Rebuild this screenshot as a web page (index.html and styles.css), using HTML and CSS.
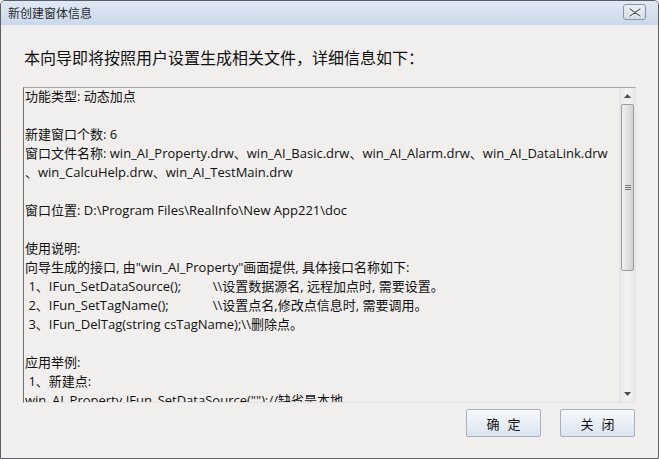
FILE: index.html
```html
<!DOCTYPE html>
<html lang="zh">
<head>
<meta charset="utf-8">
<link rel="stylesheet" href="styles.css">
</head>
<body>
<div class="window">
  <div class="titlebar">
    <span class="title">新创建窗体信息</span>
    <span class="close">
      <svg width="14" height="9" viewBox="0 0 14 9"><path d="M2 1 L12 8 M12 1 L2 8" stroke="#fff" stroke-width="3.2" stroke-linecap="round"/><path d="M2 1 L12 8 M12 1 L2 8" stroke="#5a6270" stroke-width="1.4" stroke-linecap="round"/></svg>
    </span>
  </div>
  <div class="content">
    <div class="heading">本向导即将按照用户设置生成相关文件，详细信息如下：</div>
    <div class="textbox">
      <div class="text">
        <div class="line">功能类型: 动态加点</div>
        <div class="line"></div>
        <div class="line">新建窗口个数: 6</div>
        <div class="line">窗口文件名称: win_AI_Property.drw、win_AI_Basic.drw、win_AI_Alarm.drw、win_AI_DataLink.drw</div>
        <div class="line">、win_CalcuHelp.drw、win_AI_TestMain.drw</div>
        <div class="line"></div>
        <div class="line">窗口位置: D:\Program Files\RealInfo\New App221\doc</div>
        <div class="line"></div>
        <div class="line">使用说明:</div>
        <div class="line">向导生成的接口, 由"win_AI_Property"画面提供, 具体接口名称如下:</div>
        <div class="line"> 1、<span class="col">IFun_SetDataSource();</span>\\设置数据源名, 远程加点时, 需要设置。</div>
        <div class="line"> 2、<span class="col">IFun_SetTagName();</span>\\设置点名,修改点信息时, 需要调用。</div>
        <div class="line"> 3、IFun_DelTag(string csTagName);\\删除点。</div>
        <div class="line"></div>
        <div class="line">应用举例:</div>
        <div class="line"> 1、新建点:</div>
        <div class="line">win_AI_Property.IFun_SetDataSource("");//缺省是本地</div>
      </div>
      <div class="scrollbar">
        <div class="arrow up"><svg width="7" height="4" viewBox="0 0 7 4"><path d="M0 4 L3.5 0 L7 4 Z" fill="#4d4d4d"/></svg></div>
        <div class="thumb"><span class="grip"></span></div>
        <div class="track"></div>
        <div class="arrow down"><svg width="7" height="4" viewBox="0 0 7 4"><path d="M0 0 L3.5 4 L7 0 Z" fill="#4d4d4d"/></svg></div>
      </div>
    </div>
    <div class="buttons">
      <button class="btn">确定</button>
      <button class="btn">关闭</button>
    </div>
  </div>
</div>
</body>
</html>
```
FILE: styles.css
```css
* { box-sizing: border-box; }
html, body { margin: 0; padding: 0; background: #f0efed; }
body { width: 659px; height: 459px; overflow: hidden; font-family: "Open Sans", "Noto Sans CJK SC", sans-serif; }
.window {
  width: 659px; height: 459px;
  border: 1px solid #5a5f66;
  border-radius: 5px 5px 0 0;
  background: #f0efed;
  display: flex; flex-direction: column;
  overflow: hidden;
}
.titlebar {
  height: 25px; flex: none;
  background: linear-gradient(#dfe9f4, #cfdced 80%, #c9d8ea);
  border-bottom: 1px solid #e9eef4;
  display: flex; align-items: center; justify-content: space-between;
  padding: 0 12px 0 7px;
}
.title { font-family: "Noto Sans CJK SC", sans-serif; font-size: 12px; color: #2b2b2b; line-height: 16px; }
.close {
  width: 23px; height: 16px; margin-top: -2px;
  border: 1px solid #8a95a5; border-radius: 3px;
  background: linear-gradient(#e8eef6, #d3dde9);
  display: flex; align-items: center; justify-content: center;
}
.content { flex: 1; display: flex; flex-direction: column; padding: 0 22px 0 22px; }
.heading {
  font-family: "Noto Sans CJK SC", sans-serif; font-size: 16px; color: #111;
  line-height: 22px; margin: 20px 0 0 1px;
}
.textbox {
  margin-top: 19px; height: 316px;
  border-top: 1px solid #a3a3a3; border-left: 1px solid #6f6f6f;
  border-right: 1px solid #e3e3e3; border-bottom: 1px solid #e3e3e3;
  display: flex; overflow: hidden;
  background: #f0efed;
}
.text { flex: 1; padding: 0 0 0 1px; margin-top: -1px; overflow: hidden; font-size: 13px; color: #111; }
.line { height: 19px; line-height: 19px; white-space: pre; }
.col { display: inline-block; width: 164px; }
.scrollbar {
  width: 16px; flex: none; display: flex; flex-direction: column;
  background: linear-gradient(90deg, #e6e6e6, #f3f3f3 40%, #eaeaea);
  border-left: 1px solid #e2e2e2;
}
.arrow { height: 16px; display: flex; align-items: center; justify-content: center; }
.thumb {
  height: 167px; margin: 0 1px;
  border: 1px solid #9a9a9a; border-radius: 2px;
  background: linear-gradient(90deg, #f2f2f2, #e3e3e3 45%, #d0d0d0);
  display: flex; align-items: center; justify-content: center;
}
.grip { width: 6px; height: 5px; border-top: 1px solid #777; border-bottom: 1px solid #777; }
.grip::after { content: ""; display: block; height: 1px; background: #777; margin-top: 1px; }
.track { flex: 1; }
.buttons { display: flex; justify-content: flex-end; gap: 19px; margin-top: 6px; padding-right: 1px; }
.btn {
  width: 75px; height: 28px;
  border: 1px solid #a7b0bd; border-radius: 2px;
  background: linear-gradient(#f7f9fc, #e9eef5 50%, #d9e4f1);
  font-family: "Noto Sans CJK SC", sans-serif; font-size: 13px; color: #111;
  padding: 0 0 0 8px; letter-spacing: 8px;
}
```
